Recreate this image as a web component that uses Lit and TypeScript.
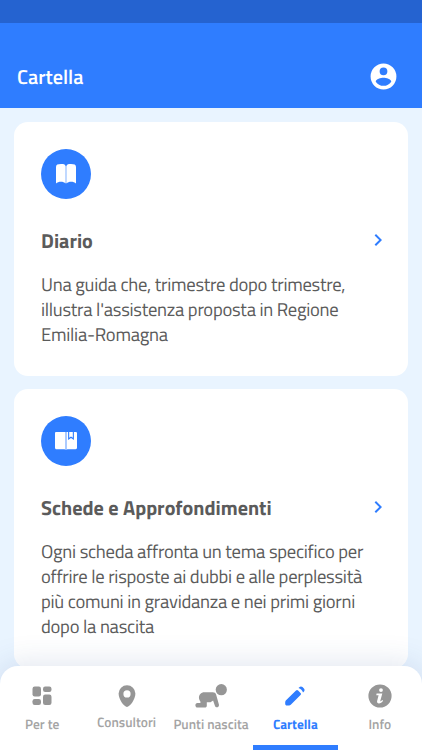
import { LitElement, html, css, svg } from "lit";
import { customElement, property } from "lit/decorators.js";
import { classMap } from "lit/directives/class-map.js";

const icons: Record<string, unknown> = {
  account: svg`<path fill-rule="evenodd" d="M12 2a10 10 0 1 0 0 20 10 10 0 0 0 0-20zm0 3a3 3 0 1 1 0 6 3 3 0 0 1 0-6zm0 14.2a7.200 7.200 0 0 1-6-3.220c.03-1.990 4-3.080 6-3.080s5.970 1.090 6 3.080a7.200 7.200 0 0 1-6 3.220z"/>`,
  chevron: svg`<path d="M8.600 16.600 13.200 12 8.600 7.400 10 6l6 6-6 6z"/>`,
  book: svg`<path d="M11.700 4.200C11 2.200 9.500 2 7 2 3.800 2 2 2.600 2 5v16.400c2.200-1.900 7.200-2.400 9.700.2zM12.300 4.200C13 2.200 14.500 2 17 2c3.200 0 5 .6 5 3v16.400c-2.200-1.900-7.200-2.400-9.700.2z"/>`,
  notebook: svg`<path d="M2.300 3h9.300v18l-1-.8H2.600C1.500 20.200 1 19.600 1 18.700V4.300C1 3.500 1.500 3 2.300 3zM12.400 3h1.700v7.900l2.900-2 2.900 2V3h1.600c1 0 1.500.5 1.500 1.300v14.500c0 .9-.5 1.400-1.500 1.400h-8.100l-1 .8zM15.200 3h3.600v5.800l-1.800-1.300-1.800 1.300z"/>`,
  grid: svg`<rect x="2.500" y="2.500" width="8.500" height="10" rx="2.200"/><rect x="13" y="2.500" width="8.500" height="5.500" rx="2.200"/><rect x="2.500" y="15" width="8.500" height="6" rx="2.200"/><rect x="13" y="10.500" width="8.500" height="10.500" rx="2.200"/>`,
  pin: svg`<path fill-rule="evenodd" d="M12 1.200a8.400 8.400 0 0 0-8.400 8.400c0 6 5.500 13.300 8.400 13.300s8.400-7.300 8.400-13.300A8.400 8.400 0 0 0 12 1.200zm0 5.100a3.600 3.600 0 1 1 0 7.200 3.600 3.600 0 0 1 0-7.200z"/>`,
  baby: svg`<circle cx="26.300" cy="5.700" r="5.600"/><path d="M9.500 8.200h8.300c1.700 0 2.800.7 3.300 2.200l2.800 10.200c.7 2.900-3.200 3.800-4 1.100l-1.800-5.200-2.600 1.800h-3.700v3.500c0 1.200-.7 1.800-1.900 1.800H2.400c-2.700 0-2.700-4.700 0-4.700h3v-1.500C2.500 14.300 4 8.200 9.500 8.200z"/>`,
  pencil: svg`<path d="M13 6.500c.7-.7 1.400-.7 2.100 0l2.400 2.400c.7.700.7 1.400 0 2.100L8 20.400c-.8.800-1.400 1.100-2.500 1.100H4c-1.200 0-1.800-.6-1.800-1.800v-1.300c0-1.100.3-1.700 1.100-2.500z"/><path d="m15.500 4 .8-.8c1-1 2.300-1 3.200-.1l1.400 1.400c.9.900.9 2.200-.1 3.200l-.8.800c-.6-2.200-2.300-3.900-4.500-4.500z"/>`,
  info: svg`<path fill-rule="evenodd" d="M12 .4a11.600 11.600 0 1 0 0 23.200A11.600 11.600 0 0 0 12 .4zm1 3.800a1.900 1.900 0 1 1 0 3.800 1.900 1.900 0 0 1 0-3.800zM8.600 9.600h5.700l-2 7.200c-.2.800.7.700 1.900-.7l.9.700c-2.400 3.600-6.700 3.400-6 .2l1.500-5.700H8.300z"/>`,
};

@customElement("ui-icon")
class UiIcon extends LitElement {
  static styles = css`
    :host { display: block; line-height: 0; }
    svg { width: 100%; height: 100%; fill: currentColor; display: block; }
  `;
  @property() name = "";
  @property() box = "0 0 24 24";
  render() {
    return html`<svg viewBox=${this.box}>${icons[this.name]}</svg>`;
  }
}

const cards = [
  { icon: "book", title: "Diario", lines: [
    "Una guida che, trimestre dopo trimestre,",
    "illustra l'assistenza proposta in Regione",
    "Emilia-Romagna" ] },
  { icon: "notebook", title: "Schede e Approfondimenti", lines: [
    "Ogni scheda affronta un tema specifico per",
    "offrire le risposte ai dubbi e alle perplessità",
    "più comuni in gravidanza e nei primi giorni",
    "dopo la nascita" ] },
];

const tabs = [
  { icon: "grid", label: "Per te" },
  { icon: "pin", label: "Consultori" },
  { icon: "baby", label: "Punti nascita" },
  { icon: "pencil", label: "Cartella", active: true },
  { icon: "info", label: "Info" },
];

@customElement("app-root")
class AppRoot extends LitElement {
  static styles = css`
    * { box-sizing: border-box; }
    :host { display: flex; flex-direction: column; position: relative; height: 750px; width: 422px; overflow: hidden;
      background: #e9f4ff; font-family: "Titillium Web", "Open Sans", sans-serif; color: #5b5b5b; text-rendering: geometricPrecision; }
    .status { flex: none; height: 23px; background: #2563d0; }
    header { flex: none; height: 85px; background: #2f7dff; display: flex; align-items: center; justify-content: space-between; padding: 22px 23px 0 17px; color: #fff; }
    h1 { margin: 0; font-size: 20.200px; font-weight: 600; }
    header ui-icon { width: 31px; height: 31px; margin: -1px 0 0; }
    main { flex: none; display: flex; flex-direction: column; gap: 13px; padding: 14px 14px 0; }
    .card { background: #fff; border-radius: 14px; padding: 26.500px 26px 28px 27px; height: 254px; }
    .card + .card { height: 279px; }
    .disc { width: 50.400px; height: 50.400px; border-radius: 50%; background: #2f7dff; color: #fff; display: grid; place-items: center; }
    .disc ui-icon { width: 24px; height: 24px; }
    .head { display: flex; justify-content: space-between; align-items: center; height: 30px; margin-top: 26.400px; }
    .head ui-icon { width: 24px; height: 24px; color: #2f7dff; margin-right: -8px; margin-top: -1px; }
    h2 { margin: 0; font-size: 20.200px; font-weight: 700; white-space: nowrap; }
    p { margin: 18.100px 0 0; font-size: 18.600px; line-height: 24.800px; font-weight: 400; letter-spacing: -0.270px; }
    .line { display: block; white-space: nowrap; width: max-content; }
    nav { position: absolute; left: 0; right: 0; bottom: 0; height: 84px; background: #fff; border-radius: 18px 18px 0 0; box-shadow: 0 0 32px rgba(40,80,140,.17); display: grid; grid-template-columns: repeat(5, 1fr); }
    .tab { display: flex; flex-direction: column; align-items: center; padding-top: 18px; color: #969696; border-bottom: 5px solid transparent; font-size: 13.500px; line-height: 18px; white-space: nowrap; font-weight: 600; }
    .tab span { margin-top: 8px; color: #a4a4a4; }
    .tab.active { color: #2f7dff; border-color: #2f7dff; font-weight: 700; font-size: 13.400px; }
    .tab.active span { color: #2f7dff; }
    .tab ui-icon { width: 24px; height: 24px; }
    .tab .baby { width: 32px; }
    .pin span { margin-top: 6px; }
  `;
  render() {
    return html`<div class="status"></div>
      <header><h1>Cartella</h1><ui-icon name="account"></ui-icon></header>
      <main>${cards.map((c) => html`<section class="card">
        <div class="disc"><ui-icon name=${c.icon}></ui-icon></div>
        <div class="head"><h2>${c.title}</h2><ui-icon name="chevron"></ui-icon></div>
        <p>${c.lines.map((l) => html`<span class="line">${l}</span>`)}</p>
      </section>`)}</main>
      <nav>${tabs.map((t) => html`<div class=${classMap({ tab: true, active: !!t.active, pin: t.icon === "pin" })}>
        <ui-icon class=${t.icon} name=${t.icon} box=${t.icon === "baby" ? "0 0 32 24" : "0 0 24 24"}></ui-icon>
        <span>${t.label}</span></div>`)}</nav>`;
  }
}
